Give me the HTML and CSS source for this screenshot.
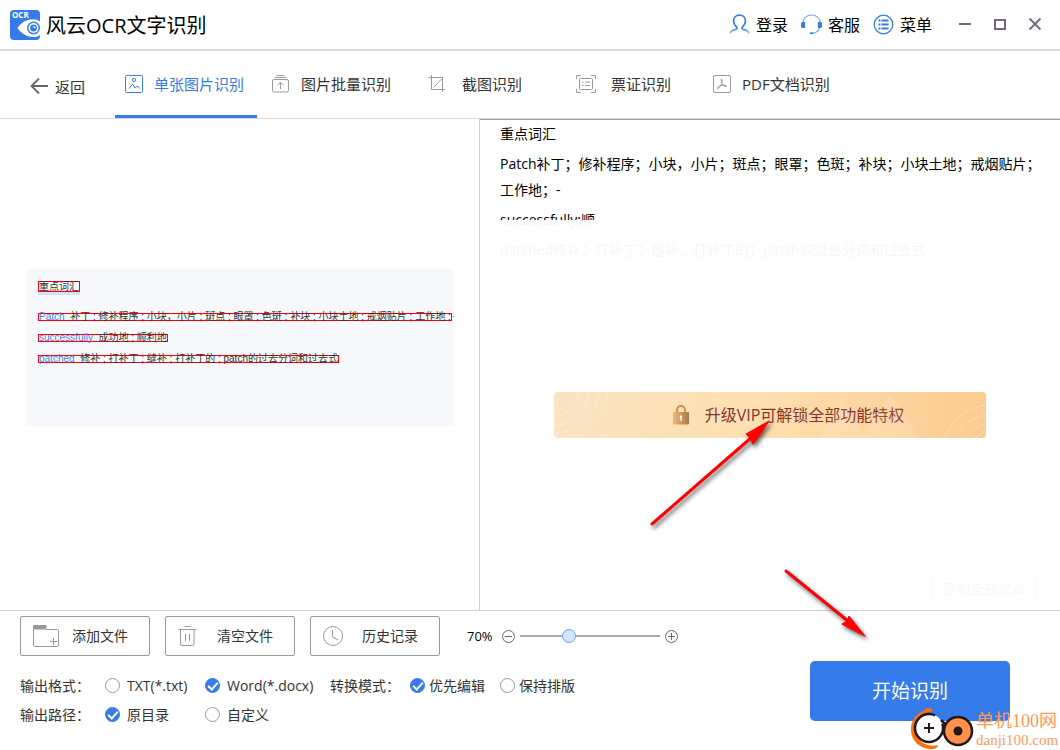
FILE: index.html
```html
<!DOCTYPE html>
<html lang="zh-CN">
<head>
<meta charset="utf-8">
<meta name="viewport" content="width=device-width, initial-scale=1">
<title>风云OCR文字识别</title>
<link rel="stylesheet" href="styles.css">
</head>
<body>
<div class="app">
  <header class="titlebar">
    <svg class="logo" viewBox="0 0 30 30" aria-hidden="true">
      <rect width="30" height="30" rx="4" fill="#357bea"/>
      <path d="M7.500 18C12 12 17.500 9.300 22.500 9.300C25.500 9.300 28 10 30 11.500V25C28 26.800 25.500 27.300 22.500 27C16 26.500 11 23 7.500 18Z" fill="#fff"/>
      <circle cx="23.500" cy="18" r="6.500" fill="#357bea"/>
      <circle cx="23.500" cy="18" r="4.200" fill="none" stroke="#fff" stroke-width="1.600"/>
      <path d="M23.500 15.500V18H26Z" fill="#fff"/>
      <text x="2" y="8" class="logo-text">OCR</text>
    </svg>
    <h1 class="title">风云OCR文字识别</h1>
    <nav class="links">
      <a class="link" href="#login"><svg width="21" height="21" viewBox="0 0 21 21" fill="none" stroke-width="1.800"><defs><linearGradient id="fade" x1="0" y1="0" x2="0" y2="1"><stop offset=".6" stop-color="#357bea"/><stop offset="1" stop-color="#a9c8f8"/></linearGradient></defs><path stroke="url(#fade)" d="M1 19.500C2 16.500 4.500 15.800 7 15.500C8.500 15 8.500 14 7.500 13C5.500 11 4.500 9 4.500 7C4.500 3.500 7 1.200 10.500 1.200S16.500 3.500 16.500 7C16.500 9 15.500 11 13.500 13C12.500 14 12.500 15 14 15.500C16.500 15.800 19 16.500 20 19.500"/></svg>登录</a>
      <a class="link" href="#service"><svg width="21" height="21" viewBox="0 0 21 21" fill="none" stroke="#357bea" stroke-width="1.200"><path stroke="#79a8f2" d="M2 9C2 4 6 1 10.500 1S19 4 19 9M18.500 13C18 16.500 15 19 11 19.500"/><path fill="#357bea" d="M1.500 8.500H3.500V13.500H2.500A2.500 2.500 0 0 1 1 9ZM19.500 8.500H17.500V13.500H18.500A2.500 2.500 0 0 0 20 9Z"/><ellipse cx="10.500" cy="19.300" rx="2" ry="1" fill="#357bea" stroke="none"/></svg>客服</a>
      <a class="link" href="#menu"><svg width="21" height="21" viewBox="0 0 21 21" fill="none" stroke="#357bea"><circle cx="10.500" cy="10.500" r="9.300" stroke-width="1.300"/><path stroke-width="1.800" d="M5.500 6.500h2M5.500 10.500h2M5.500 14.500h2M8.500 6.500h7M8.500 10.500h7M8.500 14.500h7"/></svg>菜单</a>
    </nav>
    <div class="controls">
      <button class="control" aria-label="最小化"><svg width="14" height="14" viewBox="0 0 14 14"><path d="M1 6h12"/></svg></button>
      <button class="control" aria-label="最大化"><svg width="14" height="14" viewBox="0 0 14 14"><path d="M2 2h10v9h-10z"/></svg></button>
      <button class="control" aria-label="关闭"><svg width="14" height="14" viewBox="0 0 14 14"><path d="M1.500 .5l11 11M12.500 .5l-11 11"/></svg></button>
    </div>
  </header>

  <nav class="toolbar">
    <a class="back" href="#back"><svg width="19" height="18" viewBox="0 0 19 18" fill="none" stroke="#666" stroke-width="1.800"><path d="M18 8H1M9 .5L1.500 8L9 15.500"/></svg>返回</a>
    <div class="tabs">
      <a class="tab tab-active" href="#single"><svg class="tab-icon" viewBox="0 0 20 20"><rect x="1.500" y="1.500" width="17" height="17" rx="1"/><circle cx="10" cy="6" r="1.600"/><path d="M5 14.500L8.500 10L11 14L13.500 12L15.500 14.500"/></svg>单张图片识别</a>
      <a class="tab" href="#batch"><svg class="tab-icon" viewBox="0 0 20 20"><rect x="1.500" y="5.500" width="16" height="12.500" rx="1.500"/><path d="M3.500 3.500h12M5.500 1.500h8M9.500 15V8.500M6.500 11L9.500 8.500L12.500 11"/></svg>图片批量识别</a>
      <a class="tab tab-wide" href="#crop"><svg class="tab-icon" viewBox="0 0 20 20"><path d="M4.500 1V15.500H18M1.500 3.500H15.500V18M6.500 13.500L14.500 5"/></svg>截图识别</a>
      <a class="tab tab-wide" href="#ticket"><svg class="tab-icon" viewBox="0 0 20 20"><path d="M.5 5V1.500H5M15 1.500H19.500V5M19.500 15V18.500H15M5 18.500H.5V15"/><rect x="3.500" y="4.500" width="13" height="11" rx="1"/><path d="M6 8h1.500M9 8h5M6 11.500h1.500M9 11.500h5"/></svg>票证识别</a>
      <a class="tab" href="#pdf"><svg class="tab-icon" viewBox="0 0 20 20"><rect x="1.500" y="1.500" width="17" height="17" rx="1.500"/><path d="M9.500 5C10.500 5 10 8 9.500 9.500C8.500 12 6.500 15 5.500 14.500C4.500 13.500 8 11.500 10 11.200C12.500 10.800 15 11.300 14.500 12.500C13.500 13 10.500 11.500 9.700 9C9 7 9 5 9.500 5Z"/></svg>PDF文档识别</a>
    </div>
  </nav>

  <main class="panes">
    <section class="preview">
      <div class="scan">
        <div class="scan-line scan-title"><span class="hit">重点词汇</span></div>
        <div class="scan-line"><span class="hit"><b>Patch</b>&nbsp; 补丁 ; 修补程序 ; 小块，小片 ; 斑点 ; 眼罩 ; 色斑 ; 补块 ; 小块土地 ; 戒烟贴片 ; 工作地 ;</span>－</div>
        <div class="scan-line"><span class="hit"><b>successfully</b>&nbsp; 成功地 ; 顺利地</span></div>
        <div class="scan-line"><span class="hit"><b>patched</b>&nbsp; 修补 ; 打补丁 ; 缝补 ; 打补丁的 ; patch的过去分词和过去式</span></div>
      </div>
    </section>
    <section class="result">
      <div class="result-text">
        <p>重点词汇</p>
        <p>Patch补丁；修补程序；小块，小片；斑点；眼罩；色斑；补块；小块土地；戒烟贴片；工作地；-</p>
        <p>successfully;顺</p>
        <p>patched修补；打补丁；缝补；打补丁的；patch的过去分词和过去式</p>
      </div>
      <div class="result-foot">
        <span class="hint"><svg width="20" height="20" viewBox="0 0 20 20" fill="none" stroke="#ffb84d"><circle cx="10" cy="10" r="9"/><path stroke-width="2" d="M10 5v7M10 13.500v2"/></svg>点击文字可以编辑哦</span>
        <button class="copy">复制全部文本</button>
      </div>
      <div class="mask">
        <button class="vip">
          <svg class="vip-art" viewBox="0 0 432 46" preserveAspectRatio="none" fill="none" stroke="#fff" stroke-opacity=".3">
            <circle cx="0" cy="0" r="24"/><circle cx="0" cy="-2" r="35"/><circle cx="0" cy="-4" r="45"/><circle cx="0" cy="-4" r="54"/>
            <circle cx="436" cy="60" r="47"/><circle cx="436" cy="60" r="37"/><circle cx="436" cy="60" r="28"/><circle cx="436" cy="60" r="20"/>
            <path stroke="none" fill="#fff" fill-opacity=".12" d="M264 46L288 12L312 46ZM306 46L336 2L366 46Z"/>
          </svg>
          <svg class="lock" width="18" height="20" viewBox="0 0 18 20"><defs><linearGradient id="brass"><stop offset="0" stop-color="#f5b67b"/><stop offset="1" stop-color="#ae7843"/></linearGradient></defs><path d="M5 9V5a4 4 0 0 1 8 0V9" fill="none" stroke="#c99058" stroke-width="2"/><rect x="1" y="7" width="16" height="12.500" rx="1" fill="url(#brass)"/><circle cx="9" cy="12" r="1.400" fill="#fff"/><path d="M9 12v4" stroke="#fff" stroke-width="1.200"/></svg>
          <span>升级VIP可解锁全部功能特权</span>
        </button>
      </div>
    </section>
  </main>

  <footer class="footer">
    <div class="options">
      <div class="actions">
        <button class="action"><svg width="28" height="24" viewBox="0 0 28 24" fill="none" stroke="#999"><path fill="#999" d="M1.500 1.500H14V5H1.500z"/><path d="M1.500 4.500V21A1.500 1.500 0 0 0 3 22.500H25A1.500 1.500 0 0 0 26.500 21V6.500A1 1 0 0 0 25.500 5.500H14M21.500 14v7M18 17.500h7"/></svg><span>添加文件</span></button>
        <button class="action"><svg width="28" height="24" viewBox="0 0 28 24" fill="none" stroke="#999"><path d="M7.500 2.500h6M1.500 5.500h18M3.500 5.500V20A1.500 1.500 0 0 0 5 21.500H15.500A1.500 1.500 0 0 0 17 20V5.500M8.500 10v7M12.500 10v7"/></svg><span>清空文件</span></button>
        <button class="action"><svg width="28" height="24" viewBox="0 0 28 24" fill="none" stroke="#999"><circle cx="11" cy="12" r="9.500"/><path d="M10.500 6v7L16 16"/></svg><span>历史记录</span></button>
        <div class="zoom">
          <label class="zoom-value" for="zoom">70%</label>
          <button class="step" aria-label="缩小"><svg width="15" height="15" viewBox="0 0 15 15"><circle cx="7.500" cy="7.500" r="6"/><path d="M4 7.500h7"/></svg></button>
          <input class="slider" id="zoom" type="range" min="0" max="100" value="33">
          <button class="step" aria-label="放大"><svg width="15" height="15" viewBox="0 0 15 15"><circle cx="7.500" cy="7.500" r="6"/><path d="M4 7.500h7M7.500 4v7"/></svg></button>
        </div>
      </div>
      <div class="choices">
        <span>输出格式：</span>
        <label class="choice"><input type="radio" name="format">TXT(*.txt)</label>
        <label class="choice"><input type="radio" name="format" checked>Word(*.docx)</label>
        <span>转换模式：</span>
        <label class="choice choice-tight"><input type="radio" name="mode" checked>优先编辑</label>
        <label class="choice choice-tight"><input type="radio" name="mode">保持排版</label>
      </div>
      <div class="choices">
        <span>输出路径：</span>
        <label class="choice"><input type="radio" name="path" checked>原目录</label>
        <label class="choice"><input type="radio" name="path">自定义</label>
      </div>
    </div>
    <button class="start">开始识别</button>
  </footer>

  <svg class="arrows" width="240" height="240" viewBox="640 410 240 240" aria-hidden="true">
    <g stroke="#f00" fill="#f00" stroke-linecap="round">
      <path stroke-width="3" d="M652 524L752 437"/><path stroke-width="1" d="M769 421L746 434L750 438L753 444Z"/>
      <path stroke-width="3" d="M786 571L848 621"/><path stroke-width="1" d="M865 636L849 616L847 621L842 624Z"/>
    </g>
  </svg>
  <div class="watermark">
    <svg width="64" height="44" viewBox="0 0 64 44" fill="none">
      <path d="M20 3C8 5 1 13 1 23C1 35 10 43 22 43C25 43 27 42 28 39C19 42 7 36 5 26C3 16 8 8 19 6C21 6 22 5 22 4Z" fill="#ff6f08"/>
      <path d="M12 6L17 2H20L23 5Z" fill="#ff6f08"/>
      <circle cx="19" cy="22" r="14" fill="#fff" stroke="#231815" stroke-width="2.500" stroke-dasharray="77 11" stroke-dashoffset="5"/>
      <circle cx="48" cy="25" r="14" fill="#ff914d" stroke="#231815" stroke-width="2.500"/>
      <circle cx="48" cy="25" r="4.500" fill="#231815"/>
      <path d="M19 17v10M14 22h10" stroke="#231815" stroke-width="2"/>
      <path d="M31 14L36 19" stroke="#231815" stroke-width="2.500"/>
    </svg>
    <div class="watermark-text"><span>单机100网</span><small>danji100.com</small></div>
  </div>
</div>
</body>
</html>
```

FILE: styles.css
```css
* { box-sizing: border-box; }

body {
  margin: 0;
  background: #fff;
  color: #333;
  font: 14px/20px "Open Sans", "Noto Sans CJK SC", sans-serif;
}

button {
  padding: 0;
  border: 0;
  background: none;
  color: inherit;
  font: inherit;
}

a { color: inherit; text-decoration: none; }

svg { flex: none; }

.app {
  position: relative;
  display: flex;
  flex-direction: column;
  min-height: 100vh;
}

/* Title bar */
.titlebar {
  display: flex;
  align-items: center;
  height: 51px;
  padding: 0 15px 0 10px;
  border-bottom: 2px solid #d8d8d8;
  color: #000;
}

.logo { width: 30px; height: 30px; }

.logo-text { fill: #fff; font: bold 8px "Open Sans", sans-serif; }

.title {
  flex: 1;
  margin: 0;
  padding: 2px 0 0 6px;
  font-size: 20px;
  font-weight: 400;
  line-height: 28px;
}

.links { display: flex; gap: 13px; }

.link {
  display: flex;
  align-items: center;
  gap: 6px;
  font-size: 16px;
  line-height: 24px;
}

.controls { display: flex; gap: 15px; margin-left: 23px; }

.control {
  display: grid;
  place-items: center;
  width: 20px;
  height: 20px;
}

.control svg { fill: none; stroke: #74687a; stroke-width: 2; }

/* Tabs */
.toolbar {
  display: flex;
  height: 68px;
  padding-left: 30px;
  border-bottom: 1px solid #d8d8d8;
  font-size: 15px;
}

.back {
  display: flex;
  align-items: center;
  gap: 6px;
  width: 85px;
  padding-top: 4px;
}

.tabs {
  display: grid;
  grid-template-columns: 142px 161px 149px 136px auto;
}

.tab {
  display: flex;
  align-items: center;
  gap: 10px;
  padding: 2px 0 0 9px;
  border-bottom: 3px solid transparent;
}

.tab:nth-child(2) { padding-left: 14px; }

.tab-wide { gap: 15px; }

.tab-icon {
  width: 20px;
  height: 20px;
  fill: none;
  stroke: #999;
}

.tab-active { border-color: #357bea; color: #357bea; }

.tab-active .tab-icon { stroke: #357bea; }

/* Panes */
.panes {
  display: grid;
  flex: 1;
  grid-template-columns: minmax(0, 24fr) minmax(0, 29fr);
}

.preview {
  display: flex;
  align-items: center;
  padding: 0 25px 34px 26px;
  border-right: 1px solid #d0d0d0;
}

.scan {
  display: flex;
  flex: 1;
  flex-direction: column;
  gap: 13px;
  min-width: 0;
  height: 157px;
  padding: 12px 0 0 12px;
  overflow: hidden;
  background: #f7f8fb;
  font: 10px/6px "Liberation Sans", "Noto Sans CJK SC", sans-serif;
  white-space: nowrap;
}

.scan-line { display: flex; align-items: center; }

.scan-title { margin-bottom: 8px; line-height: 9px; }

.scan-title .hit { box-shadow: 0 3px #d5e1fb; }

.hit { border: 1px solid #f00; }

.hit b { color: #4b82f0; font-weight: 400; }

.result {
  position: relative;
  display: flex;
  flex-direction: column;
  justify-content: space-between;
  border-top: 1px solid #a0a0a0;
}

.result-text {
  padding: 1px 15px 0 20px;
  color: #000;
  line-height: 26px;
}

.result-text p { margin: 0 0 4px; }

.result-foot {
  display: flex;
  align-items: center;
  justify-content: space-between;
  padding: 0 23px 5px 22px;
}

.hint {
  display: flex;
  align-items: center;
  gap: 3px;
  color: #ffb84d;
  font-size: 15px;
}

.copy {
  width: 106px;
  height: 32px;
  border: 1px solid #999;
  border-radius: 2px;
}

.mask {
  position: absolute;
  inset: 100px 0 0;
  display: grid;
  place-items: center;
  background: rgba(255, 255, 255, 0.96);
}

.vip {
  position: relative;
  display: flex;
  align-items: center;
  justify-content: center;
  gap: 15px;
  width: 432px;
  height: 46px;
  padding-left: 36px;
  overflow: hidden;
  border-radius: 4px;
  background: linear-gradient(90deg, #fbe3c3, #fee0b1 45%, #fccb91);
  color: #84342d;
  font-size: 16px;
}

.vip-art {
  position: absolute;
  inset: 0;
  width: 100%;
  height: 100%;
}

/* Footer */
.footer {
  display: flex;
  align-items: flex-start;
  justify-content: space-between;
  height: 140px;
  padding: 5px 50px 0 20px;
  border-top: 1px solid #d0d0d0;
}

.actions { display: flex; gap: 15px; margin-bottom: 15px; }

.action {
  display: flex;
  align-items: center;
  gap: 12px;
  width: 130px;
  height: 40px;
  padding-left: 11px;
  border: 1px solid #999;
  border-radius: 2px;
}

.zoom {
  display: flex;
  align-items: center;
  gap: 4px;
  margin-left: 12px;
}

.zoom-value { width: 30px; color: #000; font-size: 13px; }

.step { display: flex; }

.step svg { fill: none; stroke: #666; }

.slider {
  width: 140px;
  height: 16px;
  margin: 0;
  appearance: none;
  background: linear-gradient(#aaa, #aaa) center / 100% 2px no-repeat;
}

.slider::-webkit-slider-thumb {
  width: 14px;
  height: 14px;
  appearance: none;
  border: 1px solid #6aa2f5;
  border-radius: 50%;
  background: #d5e5fd;
}

.choices {
  display: grid;
  grid-template-columns: 85px 100px 125px 80px 90px auto;
  align-items: center;
  height: 29px;
}

.choice {
  display: flex;
  align-items: center;
  gap: 7px;
  white-space: nowrap;
}

.choice-tight { gap: 4px; }

.choice input {
  width: 15px;
  height: 15px;
  margin: 0;
  appearance: none;
  border: 1px solid #999;
  border-radius: 50%;
}

.choice input:checked {
  display: grid;
  place-items: center;
  border-color: #357bea;
  background: #357bea;
}

.choice input:checked::before {
  width: 8px;
  height: 4px;
  margin-bottom: 2px;
  border: solid #fff;
  border-width: 0 0 2px 2px;
  content: "";
  rotate: -48deg;
}

.start {
  width: 200px;
  height: 60px;
  margin-top: 45px;
  border-radius: 5px;
  background: #357bea;
  color: #fff;
  font-size: 19px;
}

/* Overlays */
.arrows {
  position: absolute;
  top: 410px;
  left: 640px;
  filter: drop-shadow(2px 3px 2px rgba(0, 0, 0, 0.6));
  pointer-events: none;
}

.watermark {
  position: absolute;
  right: 3px;
  bottom: 0;
  display: flex;
  align-items: center;
  gap: 2px;
  color: #ff9955;
  font-family: "Liberation Serif", "Noto Sans CJK SC", serif;
  pointer-events: none;
}

.watermark-text {
  display: flex;
  flex-direction: column;
  width: 81px;
  padding-top: 3px;
  white-space: nowrap;
}

.watermark-text span { font-size: 18px; }

.watermark-text small { font-size: 15px; line-height: 18px; }
```
